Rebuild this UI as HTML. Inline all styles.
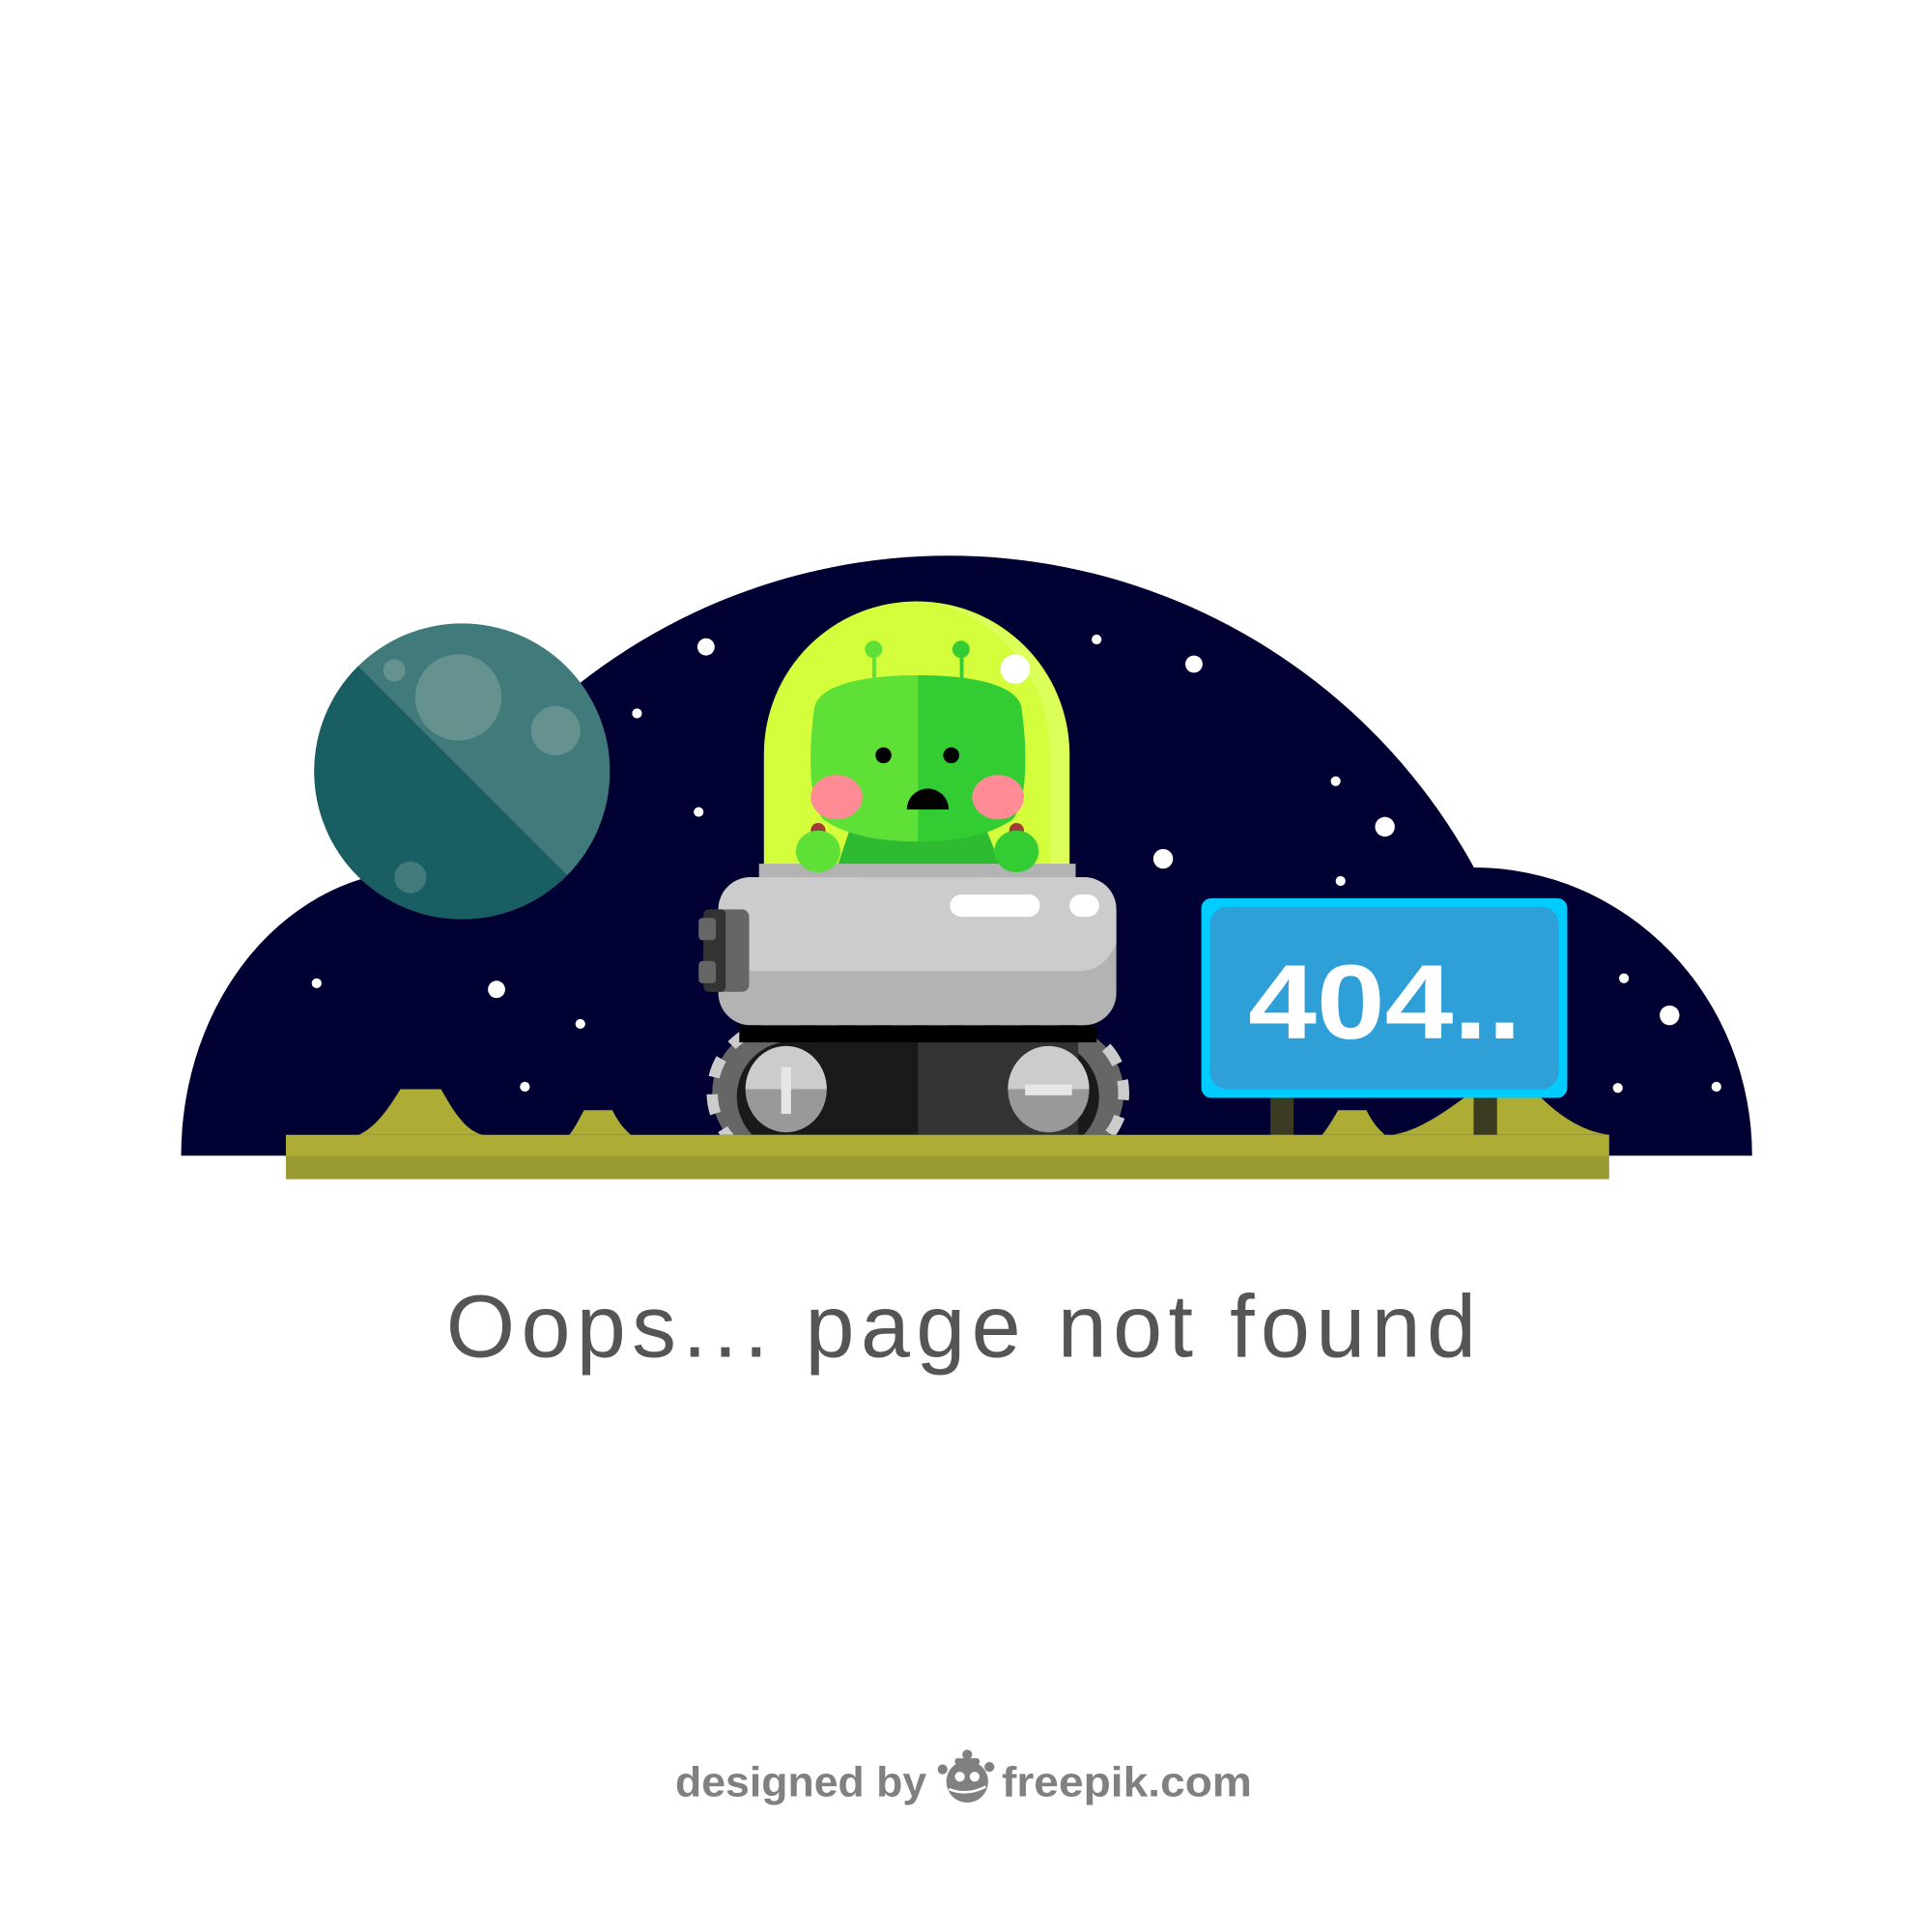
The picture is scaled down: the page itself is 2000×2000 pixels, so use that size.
<!DOCTYPE html>
<html><head><meta charset="utf-8"><style>html,body{margin:0;padding:0;background:#fff}svg{display:block}</style></head>
<body>
<svg width="2000" height="2000" viewBox="0 0 1568 1568" xmlns="http://www.w3.org/2000/svg">
<defs>
<clipPath id="sky"><rect x="0" y="0" width="1568" height="938"/></clipPath>
<clipPath id="pl"><circle cx="375" cy="626" r="120"/></clipPath>
<clipPath id="trk"><rect x="0" y="820" width="1568" height="101"/></clipPath>
</defs>
<g clip-path="url(#sky)" fill="#000033">
<ellipse cx="342" cy="938" rx="195" ry="232"/>
<ellipse cx="770" cy="938" rx="486" ry="487"/>
<ellipse cx="1196" cy="938" rx="226" ry="234"/>
</g>
<g fill="#fff">
<circle cx="573" cy="525" r="7"/><circle cx="517" cy="579" r="4"/><circle cx="567" cy="659" r="4"/>
<circle cx="890" cy="519" r="4"/><circle cx="969" cy="539" r="7"/><circle cx="1084" cy="634" r="4"/>
<circle cx="1124" cy="671" r="8"/><circle cx="944" cy="697" r="8"/><circle cx="1088" cy="715" r="4"/>
<circle cx="257" cy="798" r="4"/><circle cx="403" cy="803" r="7"/><circle cx="471" cy="831" r="4"/>
<circle cx="426" cy="882" r="4"/><circle cx="1318" cy="794" r="4"/><circle cx="1355" cy="824" r="8"/>
<circle cx="1313" cy="883" r="4"/><circle cx="1393" cy="882" r="4"/>
</g>
<g clip-path="url(#pl)">
<rect x="250" y="500" width="260" height="260" fill="#417a7b"/>
<polygon points="200,450 460,710 460,800 200,800" fill="#195e63"/>
<circle cx="372" cy="566" r="35" fill="#65918f"/>
<circle cx="451" cy="593" r="20" fill="#65918f"/>
<circle cx="320" cy="544" r="9" fill="#65918f"/>
<circle cx="333" cy="712" r="13" fill="#417a7b"/>
</g>
<!-- dome -->
<path d="M620 702 V612 A124 124 0 0 1 868 612 V702 Z" fill="#d4fd3c"/>
<path d="M760 490 A124 124 0 0 1 868 612 V702 H852 V612 A120 124 0 0 0 760 490Z" fill="#ddff5a"/>
<path d="M680 702 L690 672 H800 L812 702Z" fill="#2ebb32"/>
<path d="M745 548 C700 548 665 556 661 574 C656 610 656 650 668 665 C690 680 720 683 745 683Z" fill="#5fe036"/>
<path d="M745 548 C790 548 825 556 829 574 C834 610 834 650 822 665 C800 680 770 683 745 683Z" fill="#33cc33"/>
<rect x="708" y="527" width="3" height="25" fill="#5fe036"/><rect x="779" y="527" width="3" height="25" fill="#33cc33"/>
<circle cx="709" cy="527" r="7" fill="#5fe036"/><circle cx="780" cy="527" r="7" fill="#33cc33"/>
<circle cx="824" cy="543" r="12" fill="#fff"/>
<circle cx="717" cy="613" r="6.5" fill="#000"/><circle cx="772" cy="613" r="6.5" fill="#000"/>
<path d="M736 657 A17 17 0 0 1 770 657Z" fill="#000"/>
<ellipse cx="679" cy="647" rx="21" ry="18" fill="#ff8b95"/><ellipse cx="810" cy="647" rx="21" ry="18" fill="#ff8b95"/>
<circle cx="664" cy="674" r="6" fill="#a33a3a"/><circle cx="825" cy="674" r="6" fill="#a33a3a"/>
<rect x="616" y="701" width="257" height="13" fill="#b3b3b3"/>
<ellipse cx="664" cy="691" rx="18" ry="17" fill="#5fe036"/><ellipse cx="825" cy="691" rx="18" ry="17" fill="#33cc33"/>
<!-- tracks -->
<g clip-path="url(#trk)">
<rect x="578" y="832" width="334" height="110" rx="55" fill="#666"/>
<g stroke="#ccc" stroke-width="9" fill="none" stroke-dasharray="16 14">
<rect x="578" y="832" width="334" height="110" rx="55"/>
</g>
<rect x="598" y="845" width="294" height="90" rx="45" fill="#1a1a1a"/>
<rect x="745" y="845" width="130" height="90" fill="#333"/>
<rect x="600" y="832" width="290" height="14" fill="#000"/>
<ellipse cx="638" cy="884" rx="33" ry="35" fill="#999"/>
<path d="M605 884 A33 35 0 0 1 671 884Z" fill="#ccc"/>
<rect x="634" y="866" width="8" height="38" fill="#e6e6e6"/>
<ellipse cx="851" cy="884" rx="33" ry="35" fill="#999"/>
<path d="M818 884 A33 35 0 0 1 884 884Z" fill="#ccc"/>
<rect x="832" y="880" width="38" height="9" fill="#e6e6e6"/>
</g>
<!-- body -->
<rect x="583" y="712" width="323" height="120" rx="26" fill="#b3b3b3"/>
<path d="M609 712 H880 A26 26 0 0 1 906 738 V765 C900 780 890 788 876 788 H583 V738 A26 26 0 0 1 609 712Z" fill="#cccccc"/>
<rect x="771" y="726" width="73" height="18" rx="9" fill="#fff"/>
<rect x="868" y="726" width="24" height="18" rx="9" fill="#fff"/>
<rect x="571" y="738" width="37" height="67" rx="6" fill="#666"/>
<rect x="571" y="738" width="18" height="67" rx="4" fill="#333"/>
<rect x="567" y="745" width="14" height="18" rx="3" fill="#666"/>
<rect x="567" y="780" width="14" height="18" rx="3" fill="#666"/>
<!-- ground -->
<path d="M291 921 C305 915 315 900 325 884 H358 C368 902 378 918 392 921Z" fill="#adad35"/>
<path d="M462 921 C467 915 470 908 474 901 H497 C501 909 505 915 512 921Z" fill="#adad35"/>
<path d="M1073 921 C1078 915 1082 908 1086 901 H1109 C1113 909 1117 915 1124 921Z" fill="#adad35"/>
<path d="M1130 921 C1150 918 1170 905 1196 885 H1245 C1262 903 1282 918 1306 921Z" fill="#adad35"/>
<rect x="1031" y="885" width="19" height="37" fill="#3b3b22"/>
<rect x="1196" y="885" width="19" height="37" fill="#3b3b22"/>
<rect x="232" y="921" width="1074" height="18" fill="#adad35"/>
<rect x="232" y="938" width="1074" height="19" fill="#9a9a33"/>
<!-- sign -->
<rect x="975" y="729" width="297" height="162" rx="8" fill="#00ccff"/>
<rect x="982" y="736" width="283" height="148" rx="14" fill="#2f9fd7"/>
<text x="1013" y="843" font-family="Liberation Sans, sans-serif" font-weight="bold" font-size="86" fill="#fff" textLength="222" lengthAdjust="spacingAndGlyphs">404..</text>
<text x="362" y="1101" font-family="Liberation Sans, sans-serif" font-size="72" fill="#555" textLength="836" lengthAdjust="spacing">Oops... page not found</text>
<text x="548" y="1458" font-family="Liberation Sans, sans-serif" font-weight="bold" font-size="34" fill="#808080" textLength="204" lengthAdjust="spacingAndGlyphs">designed by</text>
<g fill="#808080">
<circle cx="785" cy="1446" r="17"/>
<circle cx="785" cy="1424" r="4"/>
<rect x="775" y="1427" width="20" height="5" rx="2"/>
<circle cx="765" cy="1436" r="4"/><circle cx="803" cy="1434" r="4"/>
<circle cx="779" cy="1442" r="4" fill="#fff"/><circle cx="791" cy="1442" r="4" fill="#fff"/>
<path d="M770 1452 Q785 1458 800 1450" stroke="#fff" stroke-width="2" fill="none"/>
</g>
<text x="813" y="1458" font-family="Liberation Sans, sans-serif" font-weight="bold" font-size="34" fill="#808080" textLength="203" lengthAdjust="spacingAndGlyphs">freepik.com</text>
</svg>
</body></html>
